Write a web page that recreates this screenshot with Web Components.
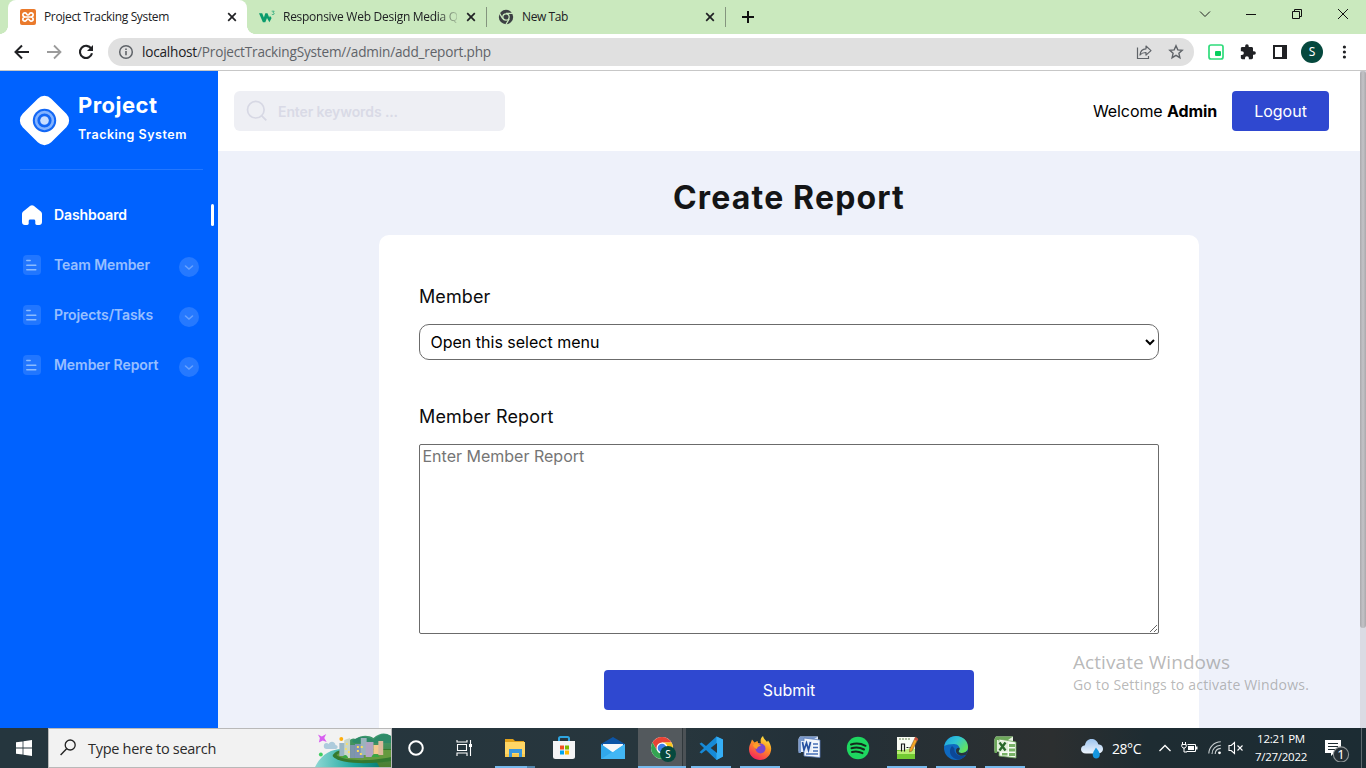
<!DOCTYPE html>
<html lang="en">
<head>
<meta charset="utf-8">
<title>Project Tracking System</title>
<style>
html,body{margin:0;height:100%;overflow:hidden}
body{font-family:Inter,"Liberation Sans",sans-serif;background:#fff}
</style>
</head>
<body>
<desktop-screen></desktop-screen>
<script>
const define = (name, render, after) => customElements.define(name, class extends HTMLElement {
  connectedCallback() {
    if (this.shadowRoot) return;
    const root = this.attachShadow({ mode: 'open' });
    root.innerHTML = '<style>*{box-sizing:border-box}svg{display:block;flex:none}</style>' + render(this);
    if (after) after(this, root);
  }
});

/* One line of text, tracked so that it fills the width in its "w" attribute. */
define('fit-text', () => `<style>:host{display:inline-block;flex:none;white-space:nowrap}span{display:inline-block}</style><span><slot></slot></span>`,
  (el, root) => {
    const span = root.querySelector('span');
    const want = parseFloat(el.getAttribute('w'));
    const n = el.textContent.length;
    span.style.letterSpacing = (want - span.getBoundingClientRect().width) / n + 'px';
    el.style.width = want + 'px';
  });

/* ---------- browser window ---------- */
const cross = `<svg width="16" height="16" viewBox="0 0 16 16"><path d="M4.2 4.2l7.6 7.6M11.8 4.2l-7.6 7.6" stroke="#202124" stroke-width="1.7"/></svg>`;

define('browser-tab', el => `<style>
:host{display:flex;align-items:center;width:239px;height:34px;padding:0 7px 0 12px;position:relative;flex:none;font:12px "Open Sans","Noto Sans",sans-serif;color:#202124}
:host([active]){background:#fff;border-radius:8px 8px 0 0;width:239px}
:host([active])::before,:host([active])::after{content:"";position:absolute;bottom:0;width:8px;height:8px}
:host([active])::before{left:-8px;background:radial-gradient(circle at 0 0,transparent 7.6px,#fff 8px)}
:host([active])::after{right:-8px;background:radial-gradient(circle at 100% 0,transparent 7.6px,#fff 8px)}
:host([line])::after{content:"";position:absolute;right:-1px;top:7px;width:1px;height:20px;background:#84957e}
.t{margin-left:8px;flex:1;overflow:hidden;display:flex;margin-right:6px;padding-bottom:1px}
:host([fade]) .t{-webkit-mask-image:linear-gradient(90deg,#000 154px,transparent 178px)}
.i{width:16px;height:16px}
</style><div class="i"><slot name="icon"></slot></div><div class="t"><slot></slot></div>${cross}`);

define('window-button', () => `<style>:host{display:flex;width:46px;height:28px;align-items:center;justify-content:center}</style><slot></slot>`);

define('browser-tabs', () => `<style>
:host{display:flex;height:34px;background:#cae9be;padding-left:8px}
.plus{margin:9px 0 0 15px;width:16px;height:16px}
.sp{flex:1}
</style>
<browser-tab active><svg slot="icon" width="16" height="16" viewBox="0 0 16 16"><rect width="16" height="16" rx="2" fill="#ea7a2c"/><path d="M5.6 8C1.8 8 2.2 3.6 5.2 3.9 7 4.100 6.500 6 8 6s1-1.900 2.800-2.100c3-.3 3.400 4.100-.4 4.100 3.800 0 3.400 4.400.4 4.100C9 11.900 9.500 10 8 10s-1 1.900-2.800 2.100C2.200 12.400 1.800 8 5.600 8zM5.500 8h5" fill="none" stroke="#fff" stroke-width="1.700"/></svg><fit-text w="125">Project Tracking System</fit-text></browser-tab>
<browser-tab fade line><svg slot="icon" width="16" height="16" viewBox="0 0 16 16"><path d="M0 4.200h3.200l1.700 4.200 1.400-4.200h2.200l1.700 4.300.7-1.700 1.700 2.200-2.200 4.200L8 9l-1.700 4.200H3.900z" fill="#0a9c6c"/><path d="M12.700 2.200h2.500l-1.200 1.400c1.600 0 1.600 2-.1 2-.7 0-1.100-.3-1.300-.7" fill="none" stroke="#2aa87c" stroke-width=".8"/></svg><fit-text w="182">Responsive Web Design Media Qu</fit-text></browser-tab>
<browser-tab line><svg slot="icon" width="16" height="16" viewBox="0 0 16 16"><circle cx="8" cy="8" r="7.200" fill="#3c4043"/><circle cx="8" cy="8" r="3.200" fill="#3c4043" stroke="#cae9be" stroke-width="1.300"/><path d="M8 4.300h7M4.800 9.900 1.300 3.900M11.200 9.900l-3.500 6" stroke="#cae9be" stroke-width="1.200"/></svg><fit-text w="46">New Tab</fit-text></browser-tab>
<svg class="plus" viewBox="0 0 16 16"><path d="M8 2v12M2 8h12" stroke="#111" stroke-width="2"/></svg>
<div class="sp"></div>
<window-button><svg width="12" height="12" viewBox="0 0 12 12"><path d="M1 3.500l5 5 5-5" fill="none" stroke="#222" stroke-width="1"/></svg></window-button>
<window-button><svg width="12" height="12" viewBox="0 0 12 12"><path d="M1 6.500h10" stroke="#111"/></svg></window-button>
<window-button><svg width="12" height="12" viewBox="0 0 12 12"><path d="M1.500 3.500h7v7h-7zM3.500 3.500v-2h7v7h-2" fill="none" stroke="#111"/></svg></window-button>
<window-button><svg width="12" height="12" viewBox="0 0 12 12"><path d="M1 1l10 10M11 1L1 11" stroke="#111" stroke-width="1"/></svg></window-button>`);

define('browser-toolbar', () => `<style>
:host{display:flex;height:37px;background:#fff;border-bottom:1px solid #c7c7c7;align-items:center;font:13.600px "Open Sans","Noto Sans",sans-serif;padding-left:12px}
.nav{display:flex;gap:12px;margin-right:12px}
.nav svg,.ext svg{width:20px;height:20px}
.box{width:1086px;height:28px;border-radius:14px;background:#e0e0e0;display:flex;align-items:center;padding:0 8px 0 8px;color:#5f6368;flex:none}
.box .u{margin-left:6px;flex:1;display:flex;line-height:28px}
.box b{font-weight:400;color:#202124}
.sh{margin-right:12px}
.ext{display:flex;gap:12px;margin-left:12px;align-items:center}
.av{width:22px;height:22px;border-radius:50%;background:#05483d;color:#fff;font:12px/22px "Noto Sans",sans-serif;text-align:center;margin:0 -1px}
</style>
<div class="nav">
<svg viewBox="0 0 20 20"><path d="M17 10H4M10 3.500L3.500 10l6.500 6.500" fill="none" stroke="#202124" stroke-width="2"/></svg>
<svg viewBox="0 0 20 20"><path d="M3 10h13M10 3.500l6.500 6.500-6.500 6.500" fill="none" stroke="#9b9b9b" stroke-width="1.800"/></svg>
<svg viewBox="0 0 20 20"><path d="M15.300 6.800A6.100 6.100 0 1 0 16 11.300" fill="none" stroke="#202124" stroke-width="2.100"/><path d="M17 3v6h-6z" fill="#202124"/></svg>
</div>
<div class="box">
<svg width="20" height="20" viewBox="0 0 20 20"><circle cx="10" cy="10" r="6.300" fill="none" stroke="#5f6368" stroke-width="1.500"/><path d="M10 9v4.300M10 6.500v1.600" stroke="#5f6368" stroke-width="1.600"/></svg>
<div class="u"><fit-text w="55"><b>localhost</b></fit-text><fit-text w="294">/ProjectTrackingSystem//admin/add_report.php</fit-text></div>
<svg class="sh" width="20" height="20" viewBox="0 0 20 20"><path d="M3.500 5.500v11h11V14" fill="none" stroke="#5f6368" stroke-width="1.200"/><path d="M6 13c.3-3.800 2.600-6 6-6.200V4l5 4.600-5 4.500v-2.600C9.300 10.400 7.600 11 6 13z" fill="none" stroke="#5f6368" stroke-width="1.200" stroke-linejoin="round"/></svg>
<svg width="20" height="20" viewBox="0 0 20 20"><path d="M10 3.800l1.800 4.100 4.400.4-3.300 3 1 4.400-3.900-2.400-3.900 2.400 1-4.400-3.300-3 4.400-.4z" fill="none" stroke="#5f6368" stroke-width="1.400"/></svg>
</div>
<div class="ext">
<svg viewBox="0 0 20 20"><rect x="3" y="3" width="14" height="14" rx="2" fill="#fff" stroke="#2fdc7b" stroke-width="1.700"/><rect x="9" y="9" width="6" height="5" rx="1" fill="#06cf5d"/></svg>
<svg viewBox="-2 -2 28 28"><path fill="#202124" d="M20.500 11H19V7c0-1.100-.9-2-2-2h-4V3.500a2.500 2.500 0 0 0-5 0V5H4c-1.100 0-2 .9-2 2v3.800h1.500a2.700 2.700 0 0 1 0 5.400H2V20c0 1.100.9 2 2 2h3.800v-1.500a2.700 2.700 0 0 1 5.400 0V22H17c1.100 0 2-.9 2-2v-4h1.500a2.500 2.500 0 0 0 0-5z"/></svg>
<svg viewBox="0 0 20 20"><path d="M3 3h14v14H3z" fill="#202124"/><path d="M5 5h7v10H5z" fill="#fff"/></svg>
<div class="av">S</div>
<svg viewBox="0 0 20 20"><g fill="#202124"><circle cx="10.400" cy="5" r="1.600"/><circle cx="10.400" cy="10" r="1.600"/><circle cx="10.400" cy="15" r="1.600"/></g></svg>
</div>`);

/* ---------- web page ---------- */
define('nav-item', el => `<style>
:host{display:flex;height:50px;align-items:center;padding-left:22px;color:rgba(255,255,255,.6);font:600 14px/18px Inter,sans-serif}
:host([active]){color:#fff}
fit-text{margin:0 0 0 12px}
.l{flex:1}
.bar{width:3px;height:22px;border-radius:2px;background:#fff;margin-right:4px}
.c{margin:4px 19px 0 0}
</style>
${el.hasAttribute('active')
  ? `<svg width="20" height="20" viewBox="0 0 20 20"><path d="M8.300.8c1-.9 2.400-.9 3.400 0l6.800 5.400c.9.700 1.500 1.700 1.500 2.900V17c0 1.700-1.200 3-2.900 3h-2.300c-.9 0-1.500-.6-1.500-1.400v-2.700c0-.9-.6-1.500-1.500-1.500H8.200c-.9 0-1.500.6-1.500 1.500v2.700c0 .8-.6 1.400-1.500 1.400H2.900C1.200 20 0 18.700 0 17V9.100c0-1.200.6-2.200 1.500-2.900z" fill="#fff"/></svg>`
  : `<svg width="20" height="20" viewBox="0 0 20 20"><rect x="1" width="18" height="20" rx="4" fill="#fff" opacity=".13"/><path d="M4.800 5.500h3.400M4.800 10.200h9M4.800 14.700h9" stroke="#8bbcff" stroke-width="1.500" stroke-linecap="round"/></svg>`}
<fit-text w="${el.getAttribute('w')}">${el.getAttribute('label')}</fit-text><div class="l"></div>
${el.hasAttribute('active') ? '<div class="bar"></div>' : `<svg class="c" width="20" height="20" viewBox="0 0 20 20"><circle cx="10" cy="10" r="10" fill="#fff" opacity=".15"/><path d="M6.500 9l3.500 3 3.500-3" fill="none" stroke="#66a1ff" stroke-width="1.600" stroke-linecap="round"/></svg>`}`);

define('side-bar', () => `<style>
:host{display:block;width:218px;background:#0062ff;color:#fff;flex:none;padding-top:20px}
.brand{display:flex;padding-left:19px;height:78px}
.brand svg{margin-top:4px}
.n{margin-left:8px;display:flex;flex-direction:column;align-items:flex-start}
.a{font:700 22px/28px Inter,sans-serif;}
.b{font:600 12.500px/16px Inter,sans-serif;margin-top:8px}
.hr{height:1px;background:#2377ff;margin:0 15px 20px 20px}
</style>
<div class="brand"><svg width="51" height="51" viewBox="0 0 51 51"><rect x="5.300" y="5.300" width="40.400" height="40.400" rx="9.500" transform="rotate(45 25.500 25.500)" fill="#fff"/><circle cx="25.500" cy="25.500" r="11.700" fill="#1267f5"/><circle cx="25.500" cy="25.500" r="8.400" fill="none" stroke="#83b3ff" stroke-width="2.600"/><circle cx="25.500" cy="25.500" r="4.300" fill="#c9deff"/></svg>
<div class="n"><fit-text class="a" w="79.5">Project</fit-text><fit-text class="b" w="109">Tracking System</fit-text></div></div>
<div class="hr"></div>
<nav-item active label="Dashboard" w="73"></nav-item>
<nav-item label="Team Member" w="96"></nav-item>
<nav-item label="Projects/Tasks" w="99"></nav-item>
<nav-item label="Member Report" w="104.5"></nav-item>`);

define('blue-button', el => `<style>
:host{display:flex;height:40px;align-items:center;justify-content:center;background:#2f48d0;color:#fff;border-radius:4px;font:400 16px Inter,sans-serif;width:var(--w)}
</style><span><slot></slot></span>`);

define('top-bar', () => `<style>
:host{display:flex;height:80px;flex:none;background:#fff;align-items:center;padding:0 31px 0 16px}
.s{width:271px;height:40px;border-radius:6px;background:#eeeff4;display:flex;align-items:center;padding-left:12px;color:#d9dae6;font:600 14px/18px Inter,sans-serif;gap:10px}
.s fit-text{padding-top:2px}
.sp{flex:1}
.w{font:400 16px Inter,sans-serif;color:#000;margin-right:15px}
b{font-weight:700}
</style>
<div class="s"><svg width="22" height="22" viewBox="0 0 22 22"><circle cx="9.800" cy="9.700" r="8.300" fill="none" stroke="#d7d8e4" stroke-width="1.700"/><path d="M15.800 15.800l4.500 4.500" stroke="#d7d8e4" stroke-width="1.900"/></svg><fit-text w="120">Enter keywords ...</fit-text></div>
<div class="sp"></div>
<fit-text class="w" w="124">Welcome <b>Admin</b></fit-text>
<blue-button style="--w:97px">Logout</blue-button>`);

define('form-field', el => `<style>
:host{display:flex;flex-direction:column;align-items:flex-start}
.l{font:400 18px/24px Inter,sans-serif;color:#0c0c0d;margin-bottom:15px}
</style><fit-text class="l" w="${el.getAttribute('w')}">${el.getAttribute('label')}</fit-text><slot></slot>`);

define('report-form', () => `<style>
:host{display:block;flex:none;width:820px;background:#fff;border-radius:10px;padding:50px 40px 0;height:520px;margin:0 auto}
select{width:740px;height:36px;border:1px solid #6b6b6b;border-radius:10px;background:#fff;font:400 16px Inter,sans-serif;padding:0 1px 0 6.500px;color:#000;letter-spacing:0}
textarea{display:block;width:740px;height:190px;font:400 16px Inter,sans-serif;border:1px solid #6b6b6b;padding:1px 2px 2px 2.500px;border-radius:2px;margin:0}
form-field+form-field{margin-top:45px}
blue-button{margin:36px auto 0}
</style>
<form-field label="Member" w="71.5"><select><option>Open this select menu</option></select></form-field>
<form-field label="Member Report" w="134.5"><textarea placeholder="Enter Member Report"></textarea></form-field>
<blue-button style="--w:370px">Submit</blue-button>`);

define('web-page', () => `<style>
:host{display:flex;height:657px;overflow:hidden}
.m{flex:1;display:flex;flex-direction:column;background:#eef1fa}
.h{font:700 32px/40px Inter,sans-serif;color:#141516;display:flex;flex:none;justify-content:center;margin:27px 0 17px}
.sb{width:6px;background:#dadbe3;flex:none}
.th{height:557px;background:linear-gradient(90deg,#a9a9ac,#c3c3c7 50%,#a9a9ac);border-radius:3px}
</style>
<side-bar></side-bar>
<div class="m"><top-bar></top-bar><div class="h"><fit-text w="232">Create Report</fit-text></div><report-form></report-form></div>
<div class="sb"><div class="th"></div></div>`);

/* ---------- Windows desktop ---------- */
define('activate-note', () => `<style>
:host{display:flex;flex-direction:column;color:rgba(140,140,140,.62);font-family:"Open Sans","Noto Sans",sans-serif}
.a{font-size:19px;line-height:26px}.b{font-size:14px;line-height:20px}
</style><fit-text class="a" w="157">Activate Windows</fit-text><fit-text class="b" w="236">Go to Settings to activate Windows.</fit-text>`);

define('task-button', () => `<style>
:host{display:flex;width:49px;height:40px;align-items:center;justify-content:center;flex:none;position:relative}
:host([open])::after{content:"";position:absolute;left:5px;bottom:0;width:40px;height:2px;background:#76b9ed}
:host([multi])::after{background:linear-gradient(90deg,#76b9ed 32px,#5285ab 32px)}
:host([current]){background:linear-gradient(90deg,transparent 1px,#53595d 1px,#53595d 45px,#30383c 45px,#30383c 46px,#4c5256 46px)}
:host([current])::after{left:1px;width:48px}
</style><slot></slot>`);

define('search-field', () => `<style>
:host{display:flex;width:344px;height:40px;background:#f2f2f2;border:1px solid #b9b9b9;align-items:center;padding-left:11px;font:14.500px "Open Sans","Noto Sans",sans-serif;color:#2b2b2b;flex:none}
fit-text{margin-left:12px}.sp{flex:1}
</style>
<svg width="16" height="18" viewBox="0 0 16 18"><circle cx="10.200" cy="6" r="5" fill="none" stroke="#222" stroke-width="1.300"/><path d="M6.600 9.800L.6 16" stroke="#222" stroke-width="1.400"/></svg>
<fit-text w="128">Type here to search</fit-text><div class="sp"></div>
<svg width="76" height="38" viewBox="0 0 78 38" preserveAspectRatio="none">
<defs><linearGradient id="sea" x2="1"><stop offset="0" stop-color="#8fd8d4"/><stop offset=".6" stop-color="#1fa9a0"/><stop offset="1" stop-color="#0a8078"/></linearGradient><linearGradient id="hill" y2="1" x2="0"><stop offset="0" stop-color="#3c9a74"/><stop offset="1" stop-color="#4d7f2e"/></linearGradient></defs>
<path d="M33 20c0-8 4-12 9-10 5-4 13-4 18-1 6-5 12-6 18-2v31H50z" fill="url(#hill)"/>
<path d="M38 12c6-5 15-5 22-1 6-6 12-7 18-4v7H40z" fill="#2e8a68"/>
<path d="M0 38c6-12 16-18 28-18 18-1 32 4 38 18z" fill="url(#sea)"/>
<path d="M18 27c2-5 9-7 18-7h42v12c-18 3-54 4-60-5z" fill="#34792f"/>
<path d="M22 26c4-4 14-5 26-5h30v7c-18 4-48 5-56-2z" fill="#659a3e"/>
<path d="M3 5.500l4 2 4.500-2.500-2 4 2.500 4-4-1.500L4 13.500 5 9z" fill="#d85ff0"/>
<circle cx="27" cy="10" r="2" fill="#ffae0d"/><circle cx="6" cy="25.500" r="2" fill="#3fce63"/>
<path d="M9 17c0-3 3-4 5-2 2-4 7-2 7 1 3 0 3 4 0 4H12c-2 0-3-1-3-3z" fill="#adcbdc"/>
<g transform="translate(0 4)"><path d="M25 10h7v13h-7z" fill="#9ab6c4"/><path d="M30 7l6-2v20h-6z" fill="#c9d6c8"/><path d="M36 12h5v13h-5z" fill="#7e95ac"/><path d="M41 11h9v14h-9z" fill="#8093b4"/><path d="M47 5h6v17h-6z" fill="#9bb3bd"/><path d="M52 9h8v15h-8z" fill="#b1a4c2"/><path d="M60 12h6v9h-6z" fill="#f3c98f"/><path d="M65 8h5v14h-5z" fill="#dbb99c"/></g>
<g fill="#ffdf58" transform="translate(0 4)"><path d="M32 10h1.500v2H32zM31 15h1.500v2H31zM34 18h1.500v2H34zM43 13h2v2h-2zM47 13h2v2h-2zM43 17h2v2h-2zM46 20h2v2h-2z"/></g>
<path d="M28 29c1-4 5-4 6 0zM58 28c1-4 7-4 8 0z" fill="#3aa743"/>
</svg>`);

define('tray-clock', () => `<style>
:host{display:flex;flex-direction:column;align-items:center;width:52px;font:11.500px/18px "Open Sans","Noto Sans",sans-serif;color:#fff}
</style><fit-text w="48">12:21 PM</fit-text><fit-text w="52">7/27/2022</fit-text>`);

define('system-tray', () => `<style>
:host{display:flex;align-items:center;height:40px;color:#fff;font:14px "Open Sans","Noto Sans",sans-serif;width:286px}
</style>
<svg width="24" height="24" viewBox="0 0 24 24"><defs><linearGradient id="cl" x2="0" y2="1"><stop offset="0" stop-color="#9cc3ee"/><stop offset="1" stop-color="#eef5fd"/></linearGradient></defs><path d="M6 17.500C2.800 17.500 1 15.500 1 13.200 1 11 2.600 9.400 5 9.200 5.500 5.500 8 3 11.500 3c3.300 0 6 2 6.700 5.200 2.800.1 4.800 2 4.800 4.600 0 2.700-2 4.700-5 4.700z" fill="url(#cl)"/><path d="M16 11.500c3 4 3.800 5.500 3.800 7.200 0 2.300-1.600 3.800-3.600 3.800s-3.500-1.500-3.500-3.700c0-1.900 1.300-4.200 3.300-7.300z" fill="#1596e0"/></svg>
<fit-text w="29" style="margin-left:8px">28°C</fit-text>
<svg style="margin-left:17px" width="14" height="12" viewBox="0 0 14 12"><path d="M1.500 9L7 3.500 12.500 9" fill="none" stroke="#fff" stroke-width="1.300"/></svg>
<svg style="margin-left:9px" width="17" height="14" viewBox="0 0 17 14"><path d="M6.500 3.500h8v7h-9" fill="none" stroke="#fff"/><path d="M7 5h6v4H7zM15 5.500h1.500v3H15z" fill="#fff"/><path d="M1.500 1v2.500M4.500 1v2.500M.8 3.500h4.400v2L4 7H2L.8 5.500zM3 7v4h3" fill="none" stroke="#fff"/></svg>
<svg style="margin-left:10px" width="14" height="14" viewBox="0 0 14 14"><g fill="none" stroke="#c8ced0" stroke-width="1.100"><path d="M.8 12.500C1 6 6 1 12.800.8M4 13C4 8 7.500 4.500 12.800 4.200M7.200 13c0-3 2-5.300 5.600-5.600"/></g><circle cx="11.500" cy="11.800" r="1.400" fill="#fff"/></svg>
<svg style="margin-left:6px" width="16" height="14" viewBox="0 0 16 14"><path d="M1 4.500h2.200L6.500 1.500v11L3.200 9.500H1z" fill="none" stroke="#fff" stroke-width="1.100"/><path d="M9.500 4.500l5 5M14.500 4.500l-5 5" stroke="#fff" stroke-width="1.100"/></svg>
<tray-clock style="margin-left:11px"></tray-clock>
<svg style="margin-left:17px" width="27" height="28" viewBox="0 0 27 28"><path d="M1 6h16v13H10l-3 3v-3H1z" fill="#fff"/><path d="M4 9.500h10M4 12.500h10M4 15.500h7" stroke="#1d2b31" stroke-width="1.100"/><circle cx="17" cy="20.500" r="7.600" fill="#263036" stroke="#8e9496" stroke-width="1.100"/><text x="17" y="25" font-size="13" font-family="Noto Sans" fill="#fff" text-anchor="middle">1</text></svg>
<div style="width:1px;height:40px;background:#5d686d;margin-left:10px"></div>`);

define('task-bar', () => `<style>
:host{display:flex;height:40px;background:linear-gradient(90deg,#25363e 0,#27363d 50%,#233038 60%,#2c2f30 77%,#1e2c32 84%,#1c2c33);align-items:center}
.st{width:48px;height:40px;display:flex;align-items:center;justify-content:center}
.g{width:2px}.sp{flex:1}
</style>
<div class="st"><svg width="16" height="16" viewBox="0 0 16 16"><path d="M0 2.300L6.600 1.400v6.200H0zM7.400 1.300L16 0v7.600H7.400zM0 8.400h6.600v6.200L0 13.700zM7.400 8.400H16V16l-8.600-1.300z" fill="#fff"/></svg></div>
<search-field></search-field>
<div class="st"><svg width="16" height="16" viewBox="0 0 16 16"><circle cx="8" cy="8" r="6.800" fill="none" stroke="#fff" stroke-width="2"/></svg></div>
<div class="st"><svg width="18" height="18" viewBox="0 0 18 18"><g fill="none" stroke="#fff" stroke-width="1.100"><path d="M2.500 5.500h9v6h-9zM2 1v2h10V1M2 17v-3h10v3M15.500 1v16"/></g><path d="M14 5h3v3h-3z" fill="#fff"/></svg></div>
<div class="g"></div>
<task-button open multi><svg width="24" height="24" viewBox="0 0 24 24"><path d="M2 3h8l2 2h9v5H2z" fill="#e2a21a"/><path d="M2 6h20v15H2z" fill="#ffd665"/><path d="M2 18h20v3H2z" fill="#f9c94c"/><path d="M6 13h13v8h-3v-4H9v4H6z" fill="#3a97dc"/></svg></task-button>
<task-button><svg width="24" height="24" viewBox="0 0 24 24"><path d="M7 7V2.500Q7 1 8.500 1h7Q17 1 17 2.500V7" fill="none" stroke="#2ea5e0" stroke-width="2"/><path d="M1 5h22v15.500Q23 23 20.500 23h-17Q1 23 1 20.500z" fill="#f4f4f5"/><path d="M8 9.500h4v4H8z" fill="#f25022"/><path d="M13 9.500h4v4h-4z" fill="#7fba00"/><path d="M8 14.500h4v4H8z" fill="#00a4ef"/><path d="M13 14.500h4v4h-4z" fill="#ffb900"/></svg></task-button>
<task-button><svg width="24" height="24" viewBox="0 0 24 24"><path d="M0 8L12 1l12 7v4H0z" fill="#0d55a6"/><path d="M2 8h20v8H2z" fill="#f4f7fa"/><path d="M0 8l12 8.500L24 8v15H0z" fill="#31a8ec"/><path d="M24 8v15H0z" fill="#42b6f4"/><path d="M2 8h20l-10 8z" fill="#f7f8f9"/></svg></task-button>
<task-button open current><svg width="26" height="26" viewBox="-1 -1 26 26" style="overflow:visible"><circle cx="12" cy="12" r="11" fill="#fff"/><path d="M2.500 6.500A11 11 0 0 1 21.500 6.500H12L7.200 14.700z" fill="#e84335"/><path d="M21.500 6.500A11 11 0 0 1 12 23l4.800-8.300A5.500 5.500 0 0 0 12 6.500z" fill="#fcc41e"/><path d="M2.500 6.500A11 11 0 0 0 12 23l4-7.200a5.500 5.500 0 0 1-8.800-1.100z" fill="#34a352"/><circle cx="12" cy="12" r="5.500" fill="#fff"/><circle cx="12" cy="12" r="4.300" fill="#3e7fe8"/><circle cx="18" cy="18" r="8" fill="#06493e"/><text x="18" y="21.600" font-size="10" font-family="Noto Sans" fill="#fff" text-anchor="middle">S</text></svg></task-button>
<task-button open><svg width="24" height="24" viewBox="0 0 24 24"><path d="M17.500.5L24 3.500v17L17.500 24 7 13.900l-4.500 3.500L.5 16.300 5 12 .5 7.700l2-1.100L7 10.100z" fill="#168ad8"/><path d="M17.500.5L24 3.500v17L17.500 24z" fill="#35aef5"/><path d="M18 7v10l-6.300-5z" fill="#29353b"/></svg></task-button>
<task-button open><svg width="24" height="24" viewBox="0 0 24 24"><defs><linearGradient id="ff" x1=".8" y1="0" x2=".3" y2="1"><stop offset="0" stop-color="#fff14b"/><stop offset=".4" stop-color="#ff9a22"/><stop offset="1" stop-color="#f5205f"/></linearGradient></defs><path d="M2.500 7.500L4 3.500l2.500 3 3-1.500.5 2 3 .5C12 4 13 1.500 15 0c.5 3 3 4 4 6l1-1.500c3 4 4 8 2.500 12C21 21 17 24 12 24S1 20 1 13.500c0-2.500.5-4.500 1.500-6z" fill="url(#ff)"/><circle cx="12.500" cy="12.500" r="5" fill="#7b46cf"/><path d="M5 9c3-2 6-1.500 8 1-3 0-4 1.500-4 3-2-.5-3.500-2-4-4z" fill="#ff9e25"/></svg></task-button>
<task-button><svg width="24" height="24" viewBox="0 0 24 24"><path d="M3 .5h18v15H1.500V3z" fill="#dce6f5"/><path d="M3 .5h18L14 5H4v12H1.500V3z" fill="#7998cc"/><path d="M7 2l16 2v17.500L7 20z" fill="#f4f7fc" stroke="#5b7cb9" stroke-width=".8"/><path d="M16 8h5M16 11.500h5M16 15h5M9 18h12" stroke="#456fb5" stroke-width="1.500"/><path d="M4 5h11v11H4z" fill="#e5edf8"/><path d="M5.500 6l1.500 8 2.500-7 2 7 2-8" fill="none" stroke="#2650a0" stroke-width="1.700"/></svg></task-button>
<task-button><svg width="24" height="24" viewBox="0 0 24 24"><circle cx="12" cy="12" r="11.200" fill="#1ed760"/><path d="M5 8.500c5-1.500 10-1 14.500 1.300M5.500 12.300c4.500-1.300 8.500-.9 12.500 1.200M6 16c3.500-1 7-.6 10.500 1.100" fill="none" stroke="#14291c" stroke-width="2" stroke-linecap="round"/></svg></task-button>
<task-button open><svg width="24" height="24" viewBox="0 0 24 24"><path d="M2 1h18v22H2z" fill="#fafcf5"/><path d="M2 14h18v9H2z" fill="#72ca32"/><path d="M2 15c6 1 12-5 18-2v5H2z" fill="#bbed76"/><path d="M4 3h12" stroke="#97aa87" stroke-width="1.300" stroke-dasharray="2 1"/><path d="M6.500 7.500v8M9.500 7.500v8M6.500 8h3M11.500 11.500h2M14.500 11.500h2" fill="none" stroke="#181818" stroke-width="1.200"/><path d="M20.500 1L23 3l-6 12-2.500 1 .2-3z" fill="#f6a523" stroke="#7c5c30" stroke-width=".6"/><path d="M20.500 1L23 3l-1 2-2.800-1.500z" fill="#c84b42"/></svg></task-button>
<task-button open><svg width="24" height="24" viewBox="0 0 24 24"><defs><linearGradient id="ed" x2="1" y2=".6"><stop offset="0" stop-color="#1c9ddf"/><stop offset=".5" stop-color="#31c5d5"/><stop offset="1" stop-color="#63e35d"/></linearGradient></defs><circle cx="12" cy="12" r="12" fill="#0f69c0"/><path d="M.3 10C1.500 4 6.300 0 12 0c7 0 12 5 12 11 0 4-3 6-6.500 6-2.500 0-3.500-1-2.500-2.500 2-3-1-6.500-5-6.500C6 8 2 8.700.3 10z" fill="url(#ed)"/><path d="M8 10c-5 6 0 13.500 7 13.500 3-.5 6-2.500 7.200-4.500-6 3-12.700-1-11.700-6.500z" fill="#0c4797"/><path d="M15 14.500c-1 1.500 0 2.500 2.500 2.500 3 0 5-1 6-3-.3 2-.8 3.500-1.500 4.700-5 2.800-10.500-.2-10-4.700.3-1.500 2-3 3.500-2 .2 1 .1 1.700-.5 2.500z" fill="#27353c"/></svg></task-button>
<task-button open><svg width="24" height="24" viewBox="0 0 24 24"><path d="M3 .5h17v15H1.500V3z" fill="#e5f1de"/><path d="M3 .5h17L15 4H4v13H1.500V3z" fill="#6da85b"/><path d="M6 3l17 3v16L6 20z" fill="#f5faf2" stroke="#68a255" stroke-width=".8"/><path d="M16 8h6v3h-6zM16 12.500h6v3h-6zM16 17h6v3h-6zM9 17h5.500v2.500H9z" fill="#78b266"/><path d="M4.500 5.500H15v10H4.500z" fill="#deedd7"/><path d="M6.500 6.500l6 8M12.500 6.500l-6 8" stroke="#28672a" stroke-width="2.300"/></svg></task-button>
<div class="sp"></div><system-tray></system-tray>`);

define('desktop-screen', () => `<style>
:host{display:flex;flex-direction:column;width:1366px;height:768px;overflow:hidden;position:relative}
activate-note{position:absolute;left:1073px;top:649px}
</style><browser-tabs></browser-tabs><browser-toolbar></browser-toolbar><web-page></web-page><task-bar></task-bar><activate-note></activate-note>`);
</script>
</body>
</html>
